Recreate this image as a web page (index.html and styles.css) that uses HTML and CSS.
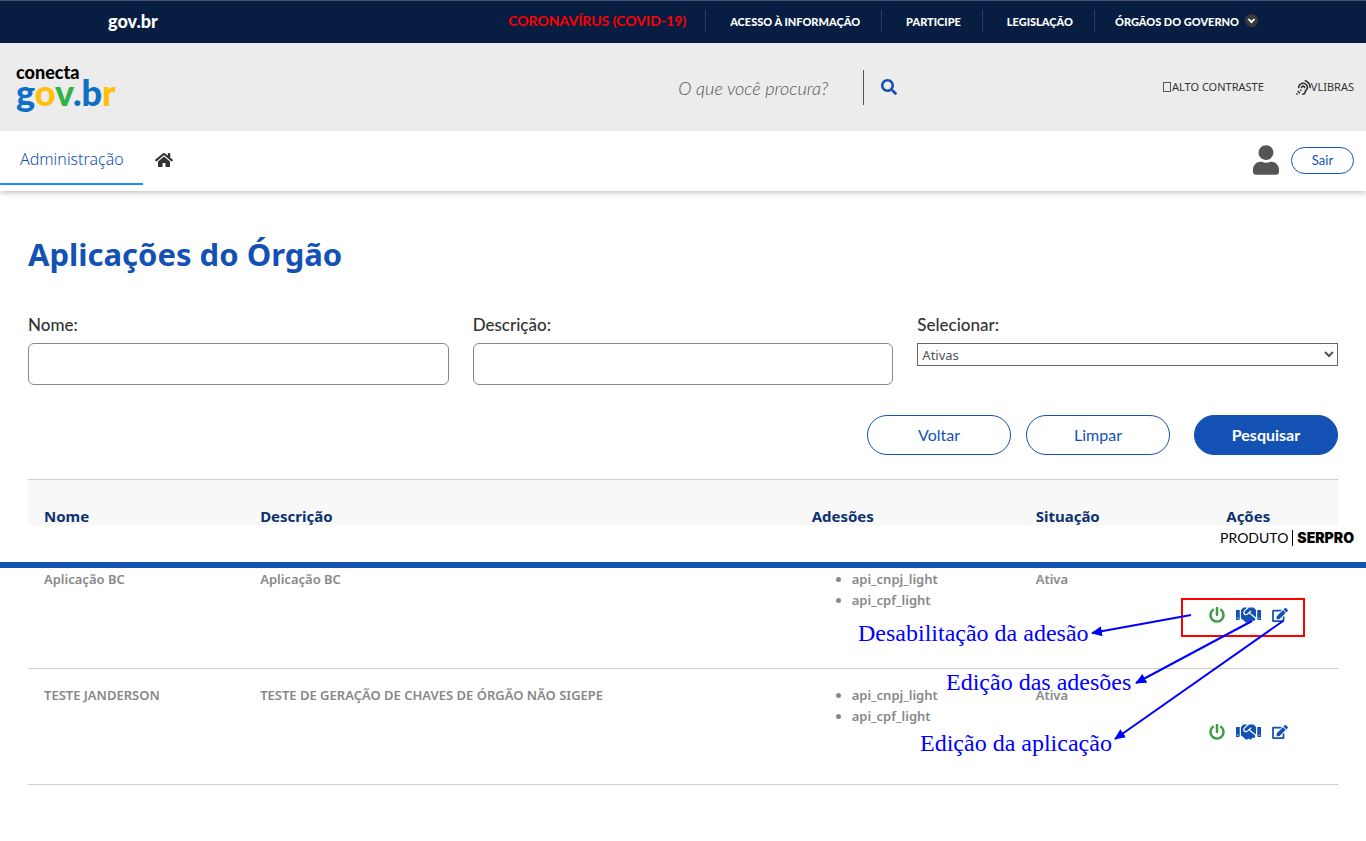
FILE: index.html
```html
<!DOCTYPE html>
<html lang="pt-BR">
<head>
<meta charset="utf-8">
<meta name="viewport" content="width=device-width, initial-scale=1">
<title>Aplicações do Órgão</title>
<link rel="stylesheet" href="styles.css">
</head>
<body>
<svg class="sprite" aria-hidden="true">
  <symbol id="power" viewBox="0 0 512 512"><path d="M400 54.1c63 45 104 118.6 104 201.9 0 136.8-110.8 247.7-247.5 248C120 504.3 8.2 393 8 256.4 7.9 173.1 48.9 99.3 111.8 54.2c11.7-8.3 28-4.8 35 7.7L162.6 90c5.9 10.5 3.1 23.8-6.6 31-41.5 30.8-68 79.6-68 134.9-.1 92.3 74.5 168.1 168 168.1 91.6 0 168.6-74.2 168-169.1-.3-51.8-24.7-101.8-68.1-134-9.7-7.2-12.4-20.5-6.5-30.9l15.8-28.1c7-12.4 23.2-16.1 34.8-7.8zM296 264V24c0-13.3-10.7-24-24-24h-32c-13.3 0-24 10.7-24 24v240c0 13.3 10.7 24 24 24h32c13.3 0 24-10.7 24-24z"/></symbol>
  <symbol id="handshake" viewBox="0 0 640 512"><path d="M434.7 64h-85.9c-8 0-15.7 3-21.6 8.4l-98.3 90c-.1.1-.2.3-.3.4-16.6 15.6-16.3 40.5-2.1 56 12.7 13.9 39.4 17.6 56.1 2.7.1-.1.3-.1.4-.2l79.9-73.2c6.5-5.9 16.7-5.5 22.6 1 6 6.5 5.5 16.6-1 22.6l-26.1 23.9L504 313.8c2.9 2.4 5.5 5 7.9 7.7V128l-54.6-54.6c-5.9-6-14.1-9.4-22.6-9.4zM544 128.2v223.9c0 17.7 14.3 32 32 32h64V128.2h-96zm48 223.9c-8.8 0-16-7.2-16-16s7.2-16 16-16 16 7.2 16 16-7.2 16-16 16zM0 384h64c17.7 0 32-14.3 32-32V128.2H0V384zm48-63.9c8.8 0 16 7.2 16 16s-7.2 16-16 16-16-7.2-16-16c0-8.9 7.2-16 16-16zm435.9 18.6L334.6 217.5l-30 27.5c-29.7 27.1-75.2 24.5-101.7-4.4-26.9-29.4-24.8-74.9 4.4-101.7L289.1 64h-83.8c-8.5 0-16.6 3.4-22.6 9.4L128 128v223.9h18.3l90.5 81.9c27.4 22.3 67.7 18.1 90-9.3l.2-.2 17.9 15.5c15.9 13 39.4 10.5 52.3-5.4l31.4-38.6 5.4 4.4c13.7 11.1 33.9 9.1 45-4.7l9.5-11.7c11.2-13.8 9.1-33.9-4.6-45.1z"/></symbol>
  <symbol id="edit" viewBox="0 0 576 512"><path d="M402.6 83.2l90.2 90.2c3.8 3.8 3.8 10 0 13.8L274.4 405.6l-92.8 10.3c-12.4 1.4-22.9-9.1-21.5-21.5l10.3-92.8L388.8 83.2c3.8-3.8 10-3.8 13.8 0zm162-22.9l-48.8-48.8c-15.2-15.2-39.9-15.2-55.2 0l-35.4 35.4c-3.8 3.8-3.8 10 0 13.8l90.2 90.2c3.8 3.8 10 3.8 13.8 0l35.4-35.4c15.2-15.3 15.2-40 0-55.2zM384 346.2V448H64V128h229.8c3.2 0 6.2-1.3 8.5-3.5l40-40c7.6-7.6 2.2-20.5-8.5-20.5H48C21.5 64 0 85.5 0 112v352c0 26.5 21.5 48 48 48h352c26.5 0 48-21.5 48-48V306.2c0-10.7-12.9-16-20.5-8.5l-40 40c-2.2 2.3-3.5 5.3-3.5 8.5z"/></symbol>
</svg>

<div class="govbar">
  <div class="govbar-inner">
    <a class="govbar-logo" href="#">gov.br</a>
    <nav class="govbar-links" aria-label="Governo">
      <a class="covid" href="#">CORONAVÍRUS (COVID-19)</a>
      <a href="#">ACESSO À INFORMAÇÃO</a>
      <a href="#">PARTICIPE</a>
      <a href="#">LEGISLAÇÃO</a>
      <a class="orgaos" href="#">ÓRGÃOS DO GOVERNO
        <svg class="chevron" viewBox="0 0 13 13" aria-hidden="true"><circle cx="6.5" cy="6.5" r="6.5" fill="#3a3a3a"/><path d="M3.5 5l3 3.2 3-3.2" fill="none" stroke="#fff" stroke-width="1.8"/></svg>
      </a>
    </nav>
  </div>
</div>

<header class="header">
  <a class="brand" href="#" aria-label="conecta gov.br">
    <span class="brand-top">conecta</span>
    <span class="brand-main"><span class="blue">g</span><span class="yellow">o</span><span class="green">v</span><span class="blue">.b</span><span class="yellow">r</span></span>
  </a>
  <form class="search">
    <input class="search-input" type="text" placeholder="O que você procura?" aria-label="O que você procura?">
    <button class="search-button" type="button" aria-label="Buscar">
      <svg width="16" height="16" viewBox="0 0 512 512" fill="currentColor"><path d="M505 442.7L405.3 343c-4.5-4.5-10.6-7-17-7H372c27.6-35.3 44-79.7 44-128C416 93.1 322.9 0 208 0S0 93.1 0 208s93.1 208 208 208c48.3 0 92.7-16.4 128-44v16.3c0 6.4 2.5 12.5 7 17l99.7 99.7c9.4 9.4 24.6 9.4 33.9 0l28.3-28.3c9.4-9.4 9.4-24.6.1-34zM208 336c-70.7 0-128-57.2-128-128 0-70.7 57.2-128 128-128 70.7 0 128 57.2 128 128 0 70.7-57.2 128-128 128z"/></svg>
    </button>
  </form>
  <div class="access">
    <a href="#"><span class="box-glyph"></span>ALTO CONTRASTE</a>
    <a href="#"><svg width="15" height="15" viewBox="0 0 512 512" fill="currentColor" aria-hidden="true"><path d="M216 260c0 15.464-12.536 28-28 28s-28-12.536-28-28c0-44.112 35.888-80 80-80s80 35.888 80 80c0 15.464-12.536 28-28 28s-28-12.536-28-28c0-13.234-10.767-24-24-24s-24 10.766-24 24zm24-176c-97.047 0-176 78.953-176 176 0 15.464 12.536 28 28 28s28-12.536 28-28c0-66.168 53.832-120 120-120s120 53.832 120 120c0 75.164-71.009 70.311-71.997 143.622L288 404c0 28.673-23.327 52-52 52-15.464 0-28 12.536-28 28s12.536 28 28 28c59.475 0 107.876-48.328 108-107.774.595-34.428 72-48.24 72-144.226 0-97.047-78.953-176-176-176zm-80 236c-17.673 0-32 14.327-32 32s14.327 32 32 32 32-14.327 32-32-14.327-32-32-32zM32 448c-17.673 0-32 14.327-32 32s14.327 32 32 32 32-14.327 32-32-14.327-32-32-32zm480-187.993c0-1.518-.012-3.025-.045-4.531C510.076 140.525 436.157 38.47 327.994 1.511c-14.633-4.998-30.549 2.809-35.55 17.442-5 14.633 2.81 30.549 17.442 35.55 85.906 29.354 144.61 110.513 146.077 201.953l.003.188c.026 1.118.033 2.236.033 3.363 0 15.464 12.536 28 28 28s28.001-12.536 28.001-28zM152.971 439.029l-80-80L39.03 392.97l80 80 33.941-33.941z"/></svg>VLIBRAS</a>
  </div>
</header>

<div class="navbar">
  <nav class="tabs" aria-label="Principal">
    <a class="tab" href="#">Administração</a>
    <a class="home" href="#" aria-label="Início"><svg width="18" height="16" viewBox="0 0 576 512" fill="currentColor"><path d="M280.37 148.26L96 300.11V464a16 16 0 0 0 16 16l112.06-.29a16 16 0 0 0 15.92-16V368a16 16 0 0 1 16-16h64a16 16 0 0 1 16 16v95.64a16 16 0 0 0 16 16.05L464 480a16 16 0 0 0 16-16V300L295.67 148.26a12.19 12.19 0 0 0-15.3 0zM571.6 251.47L488 182.56V44.05a12 12 0 0 0-12-12h-56a12 12 0 0 0-12 12v72.61L318.47 43a48 48 0 0 0-61 0L4.34 251.47a12 12 0 0 0-1.6 16.9l25.5 31A12 12 0 0 0 45.15 301l235.22-193.74a12.19 12.19 0 0 1 15.3 0L530.9 301a12 12 0 0 0 16.9-1.6l25.5-31a12 12 0 0 0-1.7-16.93z"/></svg></a>
  </nav>
  <div class="account">
    <svg width="26" height="30" viewBox="0 0 448 512" fill="currentColor" aria-hidden="true"><path d="M224 256c70.7 0 128-57.3 128-128S294.7 0 224 0 96 57.3 96 128s57.3 128 128 128zm89.6 32h-16.7c-22.2 10.2-46.9 16-72.9 16s-50.6-5.8-72.9-16h-16.7C60.2 288 0 348.2 0 422.4V464c0 26.5 21.5 48 48 48h352c26.5 0 48-21.5 48-48v-41.6c0-74.2-60.2-134.4-134.4-134.4z"/></svg>
    <button class="pill pill-small" type="button">Sair</button>
  </div>
</div>

<main class="main">
  <h1 class="title">Aplicações do Órgão</h1>
  <form>
    <div class="fields">
      <div class="field">
        <label for="nome">Nome:</label>
        <input class="text-box" id="nome" type="text">
      </div>
      <div class="field">
        <label for="descricao">Descrição:</label>
        <input class="text-box" id="descricao" type="text">
      </div>
      <div class="field">
        <label for="situacao">Selecionar:</label>
        <select class="drop-down" id="situacao"><option>Ativas</option></select>
      </div>
    </div>
    <div class="buttons">
      <button class="pill" type="button">Voltar</button>
      <button class="pill" type="button">Limpar</button>
      <button class="pill pill-primary" type="button">Pesquisar</button>
    </div>
  </form>

  <table class="table">
    <colgroup><col class="c-nome"><col class="c-desc"><col class="c-ades"><col class="c-sit"><col></colgroup>
    <thead>
      <tr><th>Nome</th><th>Descrição</th><th>Adesões</th><th>Situação</th><th class="center">Ações</th></tr>
    </thead>
    <tbody>
      <tr>
        <td>Aplicação BC</td>
        <td>Aplicação BC</td>
        <td><ul class="apis"><li>api_cnpj_light</li><li>api_cpf_light</li></ul></td>
        <td>Ativa</td>
        <td class="actions-cell"><div class="actions">
          <button class="icon on" type="button" aria-label="Desabilitar"><svg width="16" height="16"><use href="#power"/></svg></button>
          <button class="icon" type="button" aria-label="Editar adesões"><svg width="25" height="20"><use href="#handshake"/></svg></button>
          <button class="icon" type="button" aria-label="Editar aplicação"><svg width="16" height="14"><use href="#edit"/></svg></button>
        </div></td>
      </tr>
      <tr>
        <td>TESTE JANDERSON</td>
        <td>TESTE DE GERAÇÃO DE CHAVES DE ÓRGÃO NÃO SIGEPE</td>
        <td><ul class="apis"><li>api_cnpj_light</li><li>api_cpf_light</li></ul></td>
        <td>Ativa</td>
        <td class="actions-cell"><div class="actions">
          <button class="icon on" type="button" aria-label="Desabilitar"><svg width="16" height="16"><use href="#power"/></svg></button>
          <button class="icon" type="button" aria-label="Editar adesões"><svg width="25" height="20"><use href="#handshake"/></svg></button>
          <button class="icon" type="button" aria-label="Editar aplicação"><svg width="16" height="14"><use href="#edit"/></svg></button>
        </div></td>
      </tr>
    </tbody>
  </table>
</main>

<footer class="footer"><span class="produto">PRODUTO</span><span class="serpro">SERPRO</span></footer>

<svg class="notes" width="520" height="180" viewBox="0 0 520 180">
  <defs><marker id="tip" viewBox="0 0 11 10" refX="10" refY="5" markerWidth="11" markerHeight="10" markerUnits="userSpaceOnUse" orient="auto"><path d="M0 0l11 5-11 5z" fill="#00f" stroke="none"/></marker></defs>
  <rect x="336" y="9" width="122" height="37" fill="none" stroke="#f00" stroke-width="2"/>
  <g stroke="#00f" stroke-width="2">
    <path d="M345 25L246 43" marker-end="url(#tip)"/>
    <path d="M406 31L290 93" marker-end="url(#tip)"/>
    <path d="M437 31L269 149" marker-end="url(#tip)"/>
  </g>
  <g class="note-text">
    <text x="12" y="51">Desabilitação da adesão</text>
    <text x="100" y="100">Edição das adesões</text>
    <text x="74" y="161">Edição da aplicação</text>
  </g>
</svg>
</body>
</html>
```
FILE: styles.css
```css
* { box-sizing: border-box; }

body {
  position: relative;
  min-height: 100vh;
  margin: 0;
  background: #fff;
  color: #333;
  font: 14px/21px "Noto Sans", "Open Sans", sans-serif;
}

a { color: inherit; text-decoration: none; }
button, input, select { font-family: inherit; }
button { cursor: pointer; }
svg { display: block; flex: none; }
.sprite { position: absolute; width: 0; height: 0; }

/* Government bar */
.govbar {
  border-top: 1px solid #44546f;
  background: #071d41;
  color: #fff;
}
.govbar-inner {
  display: flex;
  justify-content: space-between;
  align-items: center;
  max-width: 1150px;
  height: 42px;
  margin: 0 auto;
  padding-bottom: 2px;
}
.govbar-logo { font: 900 18px/20px Lato, sans-serif; }
.govbar-links {
  display: flex;
  align-items: center;
  font: 900 11px/20px Lato, sans-serif;
}
.govbar-links a { padding: 0 21px 0 24px; }
.govbar-links a + a { border-left: 1px solid #2c3f5e; padding-top: 2px; }
.govbar-links .covid { padding-right: 19px; color: #f00; font-size: 14px; font-weight: 700; }
.govbar-links .orgaos { display: flex; gap: 6px; padding-left: 20px; padding-right: 0; }
.chevron { width: 13px; height: 13px; margin-top: 2px; }

/* Header */
.header {
  display: flex;
  align-items: center;
  justify-content: space-between;
  height: 88px;
  padding: 0 12px 0 16px;
  background: #ececec;
}
.brand { display: flex; flex-direction: column; padding-bottom: 4px; font-family: Lato, sans-serif; font-weight: 900; }
.brand-top { color: #000; font-size: 18px; line-height: 14px; }
.brand-main { font-size: 36px; line-height: 26px; }
.blue { color: #0e6fc6; }
.yellow { color: #ffbf0a; }
.green { color: #2fb344; }

.search { display: flex; align-items: center; margin-left: 314px; }
.search-input {
  width: 186px;
  height: 35px;
  padding: 2px 0 0;
  border: 0;
  border-right: 1px solid #555;
  background: none;
  font: italic 300 18px/20px Lato, sans-serif;
}
.search-input::placeholder { color: #555; opacity: 1; }
.search-button { padding: 0 17px; border: 0; background: none; color: #1351b4; }

.access { display: flex; gap: 32px; font-size: 11px; line-height: 16px; }
.access a { display: flex; align-items: center; }
.box-glyph { width: 8px; height: 10px; margin-right: 1px; border: 1px solid #555; }

/* Navigation */
.navbar {
  position: relative;
  display: flex;
  align-items: center;
  justify-content: space-between;
  height: 60px;
  padding: 0 12px 2px 0;
  background: #fff;
  box-shadow: 0 1px 6px rgba(0, 0, 0, .3);
  clip-path: inset(0 0 -12px 0);
}
.tabs { display: flex; align-items: center; gap: 12px; height: 54px; align-self: flex-start; }
.tab {
  height: 54px;
  padding: 0 19px 0 20px;
  border-bottom: 2px solid #1890ff;
  color: #1351b4;
  font-size: 16px;
  font-weight: 300;
  line-height: 56px;
}
.home { padding-top: 3px; }
.account { display: flex; align-items: center; gap: 12px; color: #555; }

.pill {
  width: 144px;
  height: 40px;
  padding: 0;
  border: 1px solid #1351b4;
  border-radius: 20px;
  background: #fff;
  color: #1351b4;
  font: 400 16px/20px Lato, sans-serif;
}
.pill-primary { margin-left: 9px; background: #1351b4; color: #fff; font-weight: 700; }
.pill-small { width: 63px; height: 27px; font-size: 13px; }

/* Content */
.main { padding: 0 28px; }
.title {
  margin: 0;
  padding: 39px 0 37px;
  color: #1351b4;
  font-size: 31px;
  font-weight: 700;
  line-height: 48px;
}
.fields { display: grid; grid-template-columns: repeat(3, 1fr); gap: 24px; }
.field { display: flex; flex-direction: column; gap: 8px; }
.field label { font: 500 17px/20px Lato, sans-serif; }
.text-box {
  width: 100%;
  height: 42px;
  padding: 0 12px;
  border: 1px solid #888;
  border-radius: 6px;
  background: #fff;
  font-size: 16px;
}
.drop-down {
  width: 100%;
  height: 23px;
  border: 1px solid #666;
  border-radius: 0;
  background: #fff;
  color: #555;
  font-size: 13px;
}
.buttons { display: flex; justify-content: flex-end; gap: 15px; padding: 30px 0 24px; }

.table { width: 100%; border-collapse: collapse; table-layout: fixed; }
.c-nome { width: 16.5%; }
.c-desc { width: 42.1%; }
.c-ades { width: 17.1%; }
.c-sit { width: 10.6%; }
.table th {
  height: 73px;
  padding: 1px 16px 0;
  border-top: 1px solid #ccc;
  background: #f8f8f8;
  color: #0c326f;
  font-size: 15px;
  font-weight: 700;
  text-align: left;
}
.table th.center { text-align: center; }
.table td {
  height: 116px;
  padding: 16px;
  border-bottom: 1px solid #ccc;
  color: #888;
  font-size: 13px;
  font-weight: 600;
  vertical-align: top;
}
.apis { margin: 0; padding-left: 40px; }
.table .actions-cell { vertical-align: middle; }
.actions { display: flex; align-items: center; justify-content: center; gap: 11px; padding-top: 10px; }
.icon { padding: 0; border: 0; background: none; color: #1351b4; }
.icon.on { color: #3f9c46; }
.icon svg { fill: currentColor; }

/* Footer strip that lies over the table */
.footer {
  position: absolute;
  top: 525px;
  left: 0;
  right: 0;
  display: flex;
  justify-content: flex-end;
  align-items: flex-start;
  height: 43px;
  padding: 5px 12px 0;
  border-bottom: 6px solid #1351b4;
  background: #fff;
  color: #000;
  font: 400 14px/16px Lato, sans-serif;
}
.produto { padding-right: 4px; border-right: 1px solid #000; }
.serpro { padding-left: 4px; font-family: Inter, sans-serif; font-weight: 900; }

/* Notes drawn over the page */
.notes { position: absolute; top: 590px; right: 0; pointer-events: none; }
.note-text { fill: #00f; font: 24px "Liberation Serif", serif; }
```
